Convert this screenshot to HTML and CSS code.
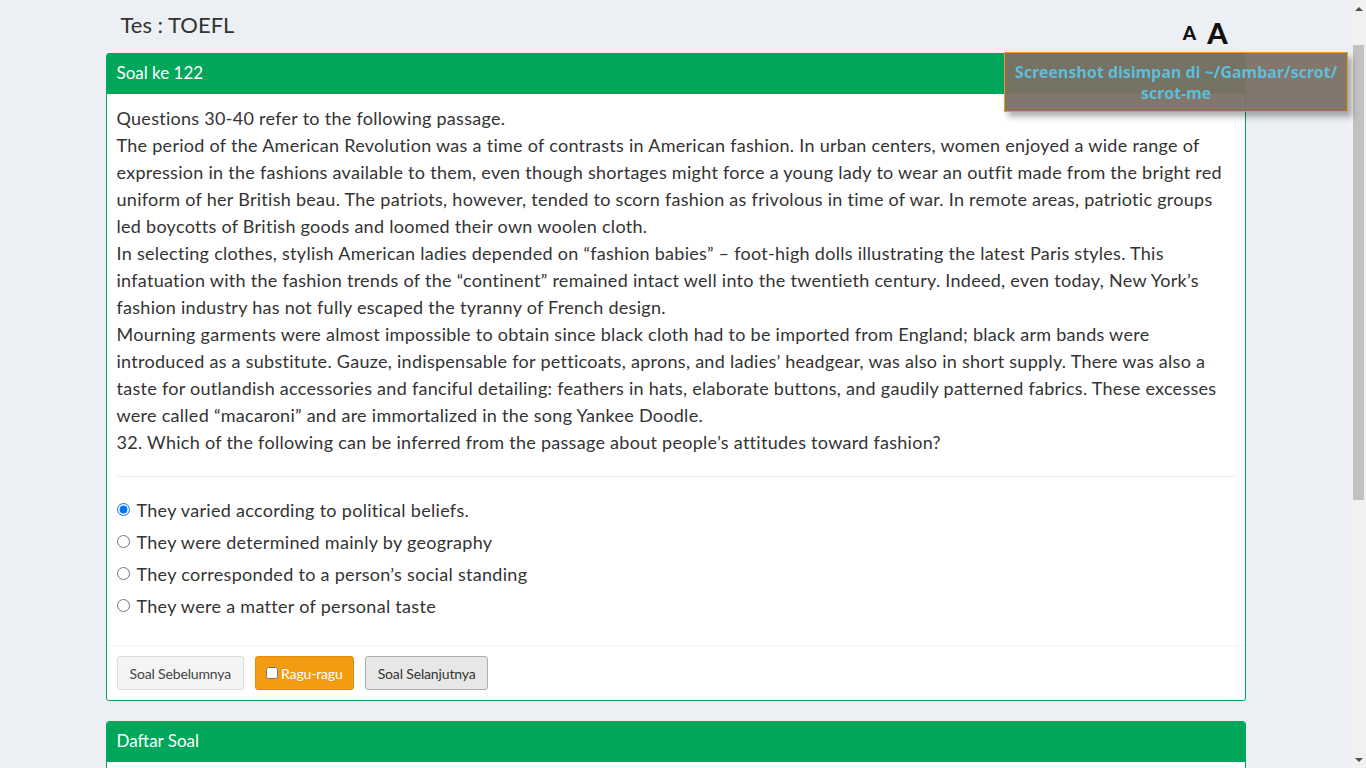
FILE: index.html
```html
<!DOCTYPE html>
<html lang="id">
<head>
<meta charset="utf-8">
<title>Tes : TOEFL</title>
<link rel="stylesheet" href="styles.css">
</head>
<body>
<div class="viewport">
  <div class="page">
    <div class="container">
      <div class="topbar">
        <h3 class="title">Tes : TOEFL</h3>
        <div class="font-size">
          <span class="fs-small">A</span>
          <span class="fs-big">A</span>
        </div>
      </div>

      <div class="box">
        <div class="box-header">Soal ke 122</div>
        <div class="box-body">
          <div class="passage">
            Questions 30-40 refer to the following passage.<br>
            The period of the American Revolution was a time of contrasts in American fashion. In urban centers, women enjoyed a wide range of expression in the fashions available to them, even though shortages might force a young lady to wear an outfit made from the bright red uniform of her British beau. The patriots, however, tended to scorn fashion as frivolous in time of war. In remote areas, patriotic groups led boycotts of British goods and loomed their own woolen cloth.<br>
            In selecting clothes, stylish American ladies depended on “fashion babies” – foot-high dolls illustrating the latest Paris styles. This infatuation with the fashion trends of the “continent” remained intact well into the twentieth century. Indeed, even today, New York’s fashion industry has not fully escaped the tyranny of French design.<br>
            Mourning garments were almost impossible to obtain since black cloth had to be imported from England; black arm bands were introduced as a substitute. Gauze, indispensable for petticoats, aprons, and ladies’ headgear, was also in short supply. There was also a taste for outlandish accessories and fanciful detailing: feathers in hats, elaborate buttons, and gaudily patterned fabrics. These excesses were called “macaroni” and are immortalized in the song Yankee Doodle.<br>
            32. Which of the following can be inferred from the passage about people’s attitudes toward fashion?
          </div>
          <hr class="divider">
          <div class="options">
            <label class="option"><input type="radio" name="jawaban" checked> They varied according to political beliefs.</label>
            <label class="option"><input type="radio" name="jawaban"> They were determined mainly by geography</label>
            <label class="option"><input type="radio" name="jawaban"> They corresponded to a person’s social standing</label>
            <label class="option"><input type="radio" name="jawaban"> They were a matter of personal taste</label>
          </div>
        </div>
        <div class="box-footer">
          <button class="btn btn-default">Soal Sebelumnya</button>
          <button class="btn btn-warning"><input type="checkbox" class="ragu-check">Ragu-ragu</button>
          <button class="btn btn-default btn-active">Soal Selanjutnya</button>
        </div>
      </div>

      <div class="box box-list">
        <div class="box-header">Daftar Soal</div>
        <div class="box-body list-body"></div>
      </div>
    </div>
  </div>
  <div class="scrollbar">
    <div class="sb-arrow sb-up"></div>
    <div class="sb-track"><div class="sb-thumb"></div></div>
    <div class="sb-arrow sb-down"></div>
  </div>
</div>

<div class="toast">Screenshot disimpan di ~/Gambar/scrot/<br>scrot-me</div>
</body>
</html>
```

FILE: styles.css
```css
* { box-sizing: border-box; }

html, body {
  margin: 0;
  height: 100%;
  overflow: hidden;
}

body {
  background: #ecf0f5;
  font-family: Lato, "Liberation Sans", sans-serif;
  color: #333;
}

.viewport {
  display: flex;
  height: 100vh;
}

.page {
  flex: 1;
  overflow: hidden;
}

.container {
  width: 1140px;
  margin: 0 auto;
}

.topbar {
  display: flex;
  justify-content: space-between;
  align-items: flex-end;
  height: 53px;
}

.title {
  margin: 0;
  padding: 10px 0 0 15px;
  align-self: flex-start;
  font-size: 22px;
  font-weight: 400;
  line-height: 30px;
  color: #333;
}

.font-size {
  display: flex;
  align-items: center;
  gap: 11px;
  height: 30px;
  margin: 0 18px 5px 0;
  font-family: Lato, "DejaVu Sans", sans-serif;
  font-weight: 900;
  color: #111;
}

.fs-small { font-size: 19px; line-height: 30px; }
.fs-big { font-size: 29px; line-height: 30px; }

.box {
  background: #fff;
  border: 1px solid #00a65a;
  border-radius: 3px;
  margin-bottom: 20px;
}

.box-header {
  background: #00a65a;
  color: #fff;
  font-size: 17px;
  line-height: 20px;
  padding: 9px 10px 11px;
}

.box-body {
  padding: 11px 10px 0;
}

.passage {
  font-size: 18px;
  line-height: 27px;
  letter-spacing: 0.28px;
}

.divider {
  border: 0;
  border-top: 1px solid #eee;
  margin: 20px 0 20px;
}

.options {
  display: flex;
  flex-direction: column;
  gap: 5px;
  padding-bottom: 25px;
}

.option {
  display: flex;
  align-items: center;
  font-size: 18px;
  line-height: 27px;
  letter-spacing: 0.3px;
}

.option input {
  margin: 0 7px 3px 0;
  width: 13px;
  height: 13px;
}

.box-footer {
  border-top: 1px solid #f4f4f4;
  padding: 10px;
  display: flex;
  gap: 11px;
}

.btn {
  font-family: Lato, "Liberation Sans", sans-serif;
  font-size: 14px;
  line-height: 19px;
  height: 34px;
  padding: 6px 12px;
  border-radius: 3px;
  border: 1px solid #ddd;
  background: #f4f4f4;
  color: #444;
  display: flex;
  align-items: center;
  letter-spacing: -0.15px;
}

.btn-active {
  background: #e7e7e7;
  border-color: #adadad;
  color: #333;
}

.btn-warning {
  background: #f39c12;
  border-color: #e08e0b;
  color: #fff;
  padding: 6px 10px;
}

.ragu-check {
  margin: 0 3px 0 0;
  width: 12px;
  height: 12px;
}

.box-list .box-header {
  border-radius: 2px 2px 0 0;
}

.list-body {
  height: 60px;
}

.scrollbar {
  width: 15px;
  background: #f1f1f1;
  display: flex;
  flex-direction: column;
}

.sb-arrow {
  height: 17px;
  display: flex;
  align-items: center;
  justify-content: center;
}

.sb-up::before {
  content: "";
  border-left: 4px solid transparent;
  border-right: 4px solid transparent;
  border-bottom: 4px solid #505050;
}

.sb-down::before {
  content: "";
  border-left: 4px solid transparent;
  border-right: 4px solid transparent;
  border-top: 4px solid #505050;
}

.sb-track {
  flex: 1;
  padding: 28px 2px 0;
}

.sb-thumb {
  height: 455px;
  background: #c1c1c1;
}

.toast {
  position: fixed;
  top: 52px;
  left: 1004px;
  width: 344px;
  height: 60px;
  padding: 9px 2px 6px;
  background: rgba(124, 111, 101, 0.95);
  border: 1px solid #e6a020;
  box-shadow: 4px 5px 6px rgba(0, 0, 0, 0.3);
  color: #5bc0de;
  font-family: "Noto Sans", sans-serif;
  font-weight: bold;
  font-size: 16px;
  line-height: 21px;
  text-align: center;
}
```
